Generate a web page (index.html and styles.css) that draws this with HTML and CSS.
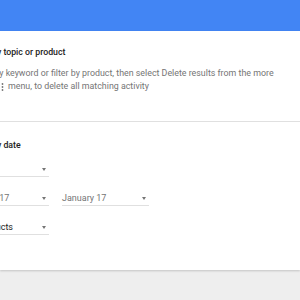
FILE: index.html
```html
<!DOCTYPE html>
<html>
<head>
<meta charset="utf-8">
<link rel="stylesheet" href="styles.css">
</head>
<body>
<div class="header"></div>
<div class="card">
  <section class="group">
    <h2 class="title">Delete by topic or product</h2>
    <p class="desc">
      <span class="line">Search by keyword or filter by product, then select Delete results from the more</span>
      <span class="line line2"><svg class="dots" width="3" height="8" viewBox="0 0 3 8"><circle cx="1.5" cy="1" r="0.9"/><circle cx="1.5" cy="4" r="0.9"/><circle cx="1.5" cy="7" r="0.9"/></svg>menu, to delete all matching activity</span>
    </p>
  </section>
  <div class="divider"></div>
  <section class="group date">
    <h2 class="title">Delete by date</h2>
    <div class="fields">
      <div class="row">
        <div class="select"><span class="value">Custom</span><span class="arrow"></span></div>
      </div>
      <div class="row">
        <div class="select"><span class="value light">January 17</span><span class="arrow"></span></div>
        <div class="select wide"><span class="value light">January 17</span><span class="arrow"></span></div>
      </div>
      <div class="row">
        <div class="select"><span class="value">All products</span><span class="arrow"></span></div>
      </div>
    </div>
  </section>
</div>
</body>
</html>
```
FILE: styles.css
```css
* { box-sizing: border-box; }
html, body { margin: 0; padding: 0; }
body {
  background: #eeeeee;
  font-family: Roboto, "Noto Sans", Arial, sans-serif;
  width: 300px;
  height: 300px;
  overflow: hidden;
}
.header {
  height: 31px;
  background: #4285f4;
}
.card {
  background: #ffffff;
  height: 239px;
  box-shadow: 0 1px 2px rgba(0, 0, 0, 0.18);
  overflow: hidden;
}
.group {
  margin-left: -35px;
  padding-top: 15px;
}
.title {
  margin: 0;
  font-size: 8.75px;
  line-height: 12px;
  font-weight: 500;
  color: #212121;
  white-space: nowrap;
}
.desc {
  margin: 9px 0 0;
  font-size: 8.85px;
  line-height: 13px;
  color: #757575;
  white-space: nowrap;
}
.line { display: block; }
.line2 {
  padding-left: 36px;
  display: flex;
  align-items: center;
  gap: 4px;
}
.dots { fill: #757575; display: block; }
.divider {
  height: 1px;
  background: #e0e0e0;
  margin-top: 28px;
}
.date { padding-top: 17px; }
.fields {
  margin-top: 12px;
  display: flex;
  flex-direction: column;
  gap: 15px;
}
.row {
  display: flex;
  gap: 13px;
}
.select {
  width: 84px;
  height: 14px;
  display: flex;
  align-items: center;
  justify-content: space-between;
  border-bottom: 1px solid #e0e0e0;
  padding-bottom: 1px;
  font-size: 9px;
  line-height: 12px;
  color: #212121;
  white-space: nowrap;
}
.select.wide { width: 87px; }
.value.light { color: #757575; }
.arrow {
  width: 0;
  height: 0;
  border-left: 2.5px solid transparent;
  border-right: 2.5px solid transparent;
  border-top: 3px solid #757575;
  margin-right: 3px;
}
```
